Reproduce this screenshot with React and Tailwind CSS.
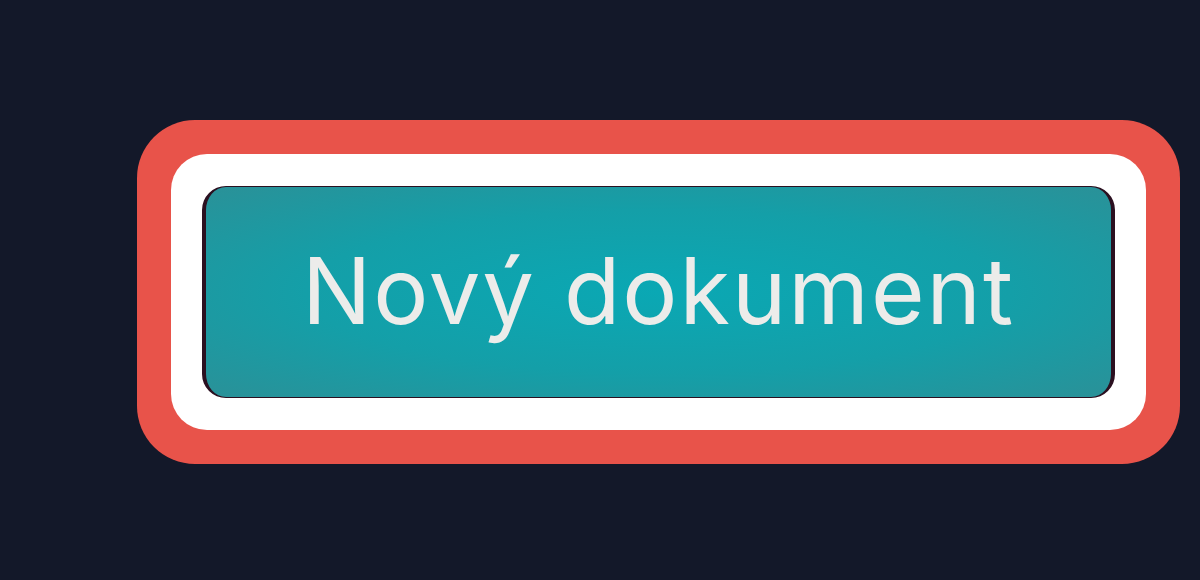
export default function App() {
  return (
    <div className="w-[1200px] h-[580px] bg-[#131829] pt-[120px] pl-[137px]">
      {/* focus ring: red outer, white inner */}
      <div className="w-[1043px] h-[344px] rounded-[58px] bg-[#e8534a] p-[34px]">
        <div className="w-full h-full rounded-[36px] bg-white py-[32px] px-[31px]">
          <button
            type="button"
            className="w-full h-full flex items-center justify-center rounded-[24px] border-x-[4px] border-y-[1px] border-[#2b1020] bg-[radial-gradient(ellipse_at_center,#0aa8b4_0%,#149fa8_55%,#2a9198_100%)] text-[#ececea] text-[92px] leading-none font-normal tracking-[2px] pb-[2px]"
            style={{ fontFamily: 'Inter, "Noto Sans", sans-serif' }}
          >
            Nový dokument
          </button>
        </div>
      </div>
    </div>
  );
}
